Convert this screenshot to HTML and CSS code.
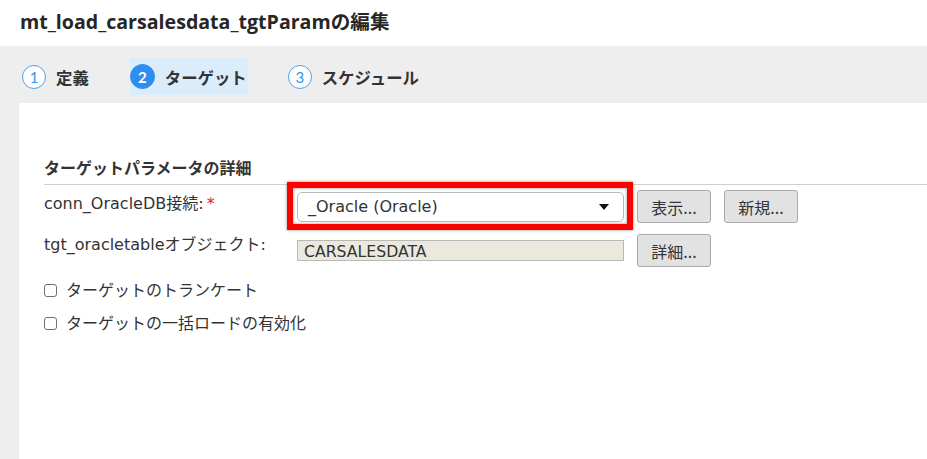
FILE: index.html
```html
<!DOCTYPE html>
<html lang="ja">
<head>
<meta charset="utf-8">
<link rel="stylesheet" href="styles.css">
</head>
<body>
<header class="title">mt_load_carsalesdata_tgtParamの編集</header>
<div class="stage">
  <nav class="tabs">
    <div class="tab"><span class="num">1</span><span class="tab-label">定義</span></div>
    <div class="tab active"><span class="num">2</span><span class="tab-label">ターゲット</span></div>
    <div class="tab"><span class="num">3</span><span class="tab-label">スケジュール</span></div>
  </nav>
  <section class="panel">
    <h2 class="section-title">ターゲットパラメータの詳細</h2>
    <div class="params">
      <label class="label">conn_OracleDB接続:<span class="req">*</span></label>
      <div class="highlight">
        <div class="select"><span>_Oracle (Oracle)</span><span class="caret"></span></div>
      </div>
      <button class="btn">表示...</button>
      <button class="btn">新規...</button>

      <label class="label label2">tgt_oracletableオブジェクト:</label>
      <div class="input">CARSALESDATA</div>
      <button class="btn">詳細...</button>
    </div>
    <div class="checks">
      <label class="check"><span class="box"></span>ターゲットのトランケート</label>
      <label class="check"><span class="box"></span>ターゲットの一括ロードの有効化</label>
    </div>
  </section>
</div>
</body>
</html>
```

FILE: styles.css
```css
html, body {
  margin: 0;
  padding: 0;
  height: 100%;
}
body {
  font-family: "DejaVu Sans", "Noto Sans CJK JP", sans-serif;
  font-size: 16px;
  color: #333;
  background: #eeeeee;
  display: flex;
  flex-direction: column;
  overflow: hidden;
}
.title {
  background: #fff;
  height: 46px;
  box-sizing: border-box;
  padding: 9px 0 0 20px;
  font-family: "Open Sans", "Noto Sans CJK JP", sans-serif;
  font-weight: 700;
  font-size: 19.6px;
  line-height: 26px;
  color: #262626;
  flex: none;
}
.stage {
  flex: 1;
  display: flex;
  flex-direction: column;
}
.tabs {
  display: flex;
  align-items: center;
  gap: 40px;
  height: 57px;
  padding: 4px 0 0 22px;
  box-sizing: border-box;
}
.tab {
  display: flex;
  align-items: center;
  gap: 10px;
  height: 37px;
  padding: 0 1px 0 0;
  font-family: "Noto Sans CJK JP", sans-serif;
  font-weight: 700;
  font-size: 16.4px;
  color: #333;
}
.tab.active {
  background: #dbecfb;
}
.num {
  width: 24px;
  height: 24px;
  box-sizing: border-box;
  border: 1.5px solid #4c9ff0;
  border-radius: 50%;
  background: #fff;
  color: #3a92ee;
  font-family: "Lato", sans-serif;
  font-weight: 400;
  font-size: 15px;
  display: flex;
  align-items: center;
  justify-content: center;
}
.tab.active .num {
  background: #2e8ef0;
  border-color: #2e8ef0;
  color: #fff;
  font-weight: 700;
  width: 25px;
  height: 25px;
}
.panel {
  flex: 1;
  background: #fff;
  margin-left: 19px;
  padding: 54px 0 0 25px;
}
.section-title {
  margin: 0;
  font-family: "Noto Sans CJK JP", sans-serif;
  font-weight: 700;
  font-size: 16px;
  line-height: 20px;
  color: #333;
  padding-bottom: 7px;
  border-bottom: 1px solid #cfcfcf;
}
.params {
  display: grid;
  grid-template-columns: 240px 327px auto auto 1fr;
  column-gap: 13px;
  row-gap: 11px;
  padding-top: 5px;
  align-items: center;
}
.label {
  align-self: start;
  padding-top: 4px;
  line-height: 20px;
  white-space: nowrap;
}
.label2 {
  padding-top: 1px;
  grid-column: 1;
}
.req {
  color: #e0201c;
  margin-left: 3px;
}
.highlight {
  position: relative;
}
.highlight::after {
  content: "";
  position: absolute;
  left: -10px;
  top: -10px;
  right: -9px;
  bottom: -8px;
  border: 6px solid #f00;
  box-shadow: 0 0 3px rgba(0,0,0,0.45), inset 0 0 3px rgba(0,0,0,0.45);
  pointer-events: none;
}
.select {
  height: 30px;
  box-sizing: border-box;
  border: 1px solid #b9b9b9;
  border-radius: 5px;
  background: #fff;
  display: flex;
  align-items: center;
  justify-content: space-between;
  padding: 0 14px 0 10px;
  color: #333;
}
.caret {
  width: 0;
  height: 0;
  border-left: 5px solid transparent;
  border-right: 5px solid transparent;
  border-top: 6px solid #111;
}
.btn {
  font-family: "Noto Sans CJK JP", sans-serif;
  font-size: 16px;
  color: #333;
  height: 33px;
  padding: 0 10px;
  min-width: 74px;
  background: #e2e2e2;
  border: 1px solid #aaaaaa;
  border-radius: 3px;
  line-height: 20px;
}
.input {
  grid-column: 2;
  height: 21px;
  box-sizing: border-box;
  border: 1px solid #b8b8b8;
  background: #ebe9dd;
  padding: 0 6px;
  line-height: 21px;
  font-size: 15.7px;
  color: #333;
}
.checks {
  display: flex;
  flex-direction: column;
  gap: 13px;
  padding-top: 12px;
}
.check {
  display: flex;
  align-items: center;
  gap: 9px;
  font-family: "Noto Sans CJK JP", sans-serif;
  line-height: 20px;
  color: #333;
}
.box {
  width: 13px;
  height: 13px;
  box-sizing: border-box;
  border: 1px solid #707070;
  border-radius: 3px;
  background: #fff;
  margin-top: 2px;
}
```
